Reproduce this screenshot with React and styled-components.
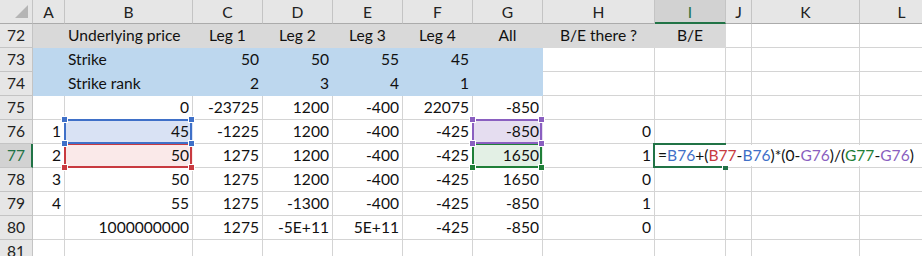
import React from "react";
import styled, { createGlobalStyle } from "styled-components";

const GRID = "#d4d4d4";
const HEAD_LINE = "#c4c4c4";
const EXCEL_GREEN = "#217346";

const GlobalStyle = createGlobalStyle`
  body {
    margin: 0;
    background: #fff;
    overflow: hidden;
    font-family: "Lato", "Liberation Sans", sans-serif;
  }
`;

const COLS = [
  ["A", 32], ["B", 128], ["C", 70], ["D", 70], ["E", 70], ["F", 70],
  ["G", 70], ["H", 112], ["I", 71], ["J", 26], ["K", 108], ["L", 84],
];

const Sheet = styled.div`
  display: grid;
  grid-template-columns: 33px ${COLS.map(([, w]) => `${w}px`).join(" ")};
  grid-auto-rows: 24px;
  font-size: 15.6px;
  color: #111;
  width: max-content;
`;

const Corner = styled.div`
  background: #e6e6e6;
  border-right: 1px solid ${HEAD_LINE};
  border-bottom: 1px solid #ababab;
  box-sizing: border-box;
  display: flex;
  align-items: flex-end;
  justify-content: flex-end;
  padding: 0 3px 4px 0;
`;

const ColHead = styled.div`
  background: ${(p) => (p.$active ? "#d2d2d2" : "#e6e6e6")};
  color: ${(p) => (p.$active ? EXCEL_GREEN : "#222")};
  border-right: 1px solid ${HEAD_LINE};
  border-bottom: ${(p) => (p.$active ? `2px solid ${EXCEL_GREEN}` : "1px solid #ababab")};
  box-sizing: border-box;
  display: flex;
  align-items: center;
  justify-content: center;
  padding-top: ${(p) => (p.$active ? "1px" : "0")};
`;

const RowHead = styled.div`
  background: ${(p) => (p.$active ? "#d2d2d2" : "#e6e6e6")};
  color: ${(p) => (p.$active ? EXCEL_GREEN : "#222")};
  border-right: ${(p) => (p.$active ? `2px solid ${EXCEL_GREEN}` : `1px solid ${HEAD_LINE}`)};
  border-bottom: 1px solid ${HEAD_LINE};
  box-sizing: border-box;
  text-align: center;
  line-height: 23px;
  padding-left: ${(p) => (p.$active ? "1px" : "0")};
`;

const Cell = styled.div`
  position: relative;
  box-sizing: border-box;
  background: ${(p) => p.$fill || "#fff"};
  border-right: 1px solid ${(p) => p.$fill || GRID};
  border-bottom: 1px solid ${(p) => p.$fill || GRID};
  padding: 0 3px;
  line-height: 23px;
  white-space: nowrap;
  text-align: ${(p) => p.$align};
`;

const SelBox = styled.div`
  position: absolute;
  top: -1px;
  left: -1px;
  right: 0;
  bottom: -1px;
  border: 2px solid ${(p) => p.$color};
  z-index: ${(p) => p.$z};
  pointer-events: none;
`;

const Handle = styled.span`
  position: absolute;
  width: 5px;
  height: 5px;
  background: ${(p) => p.$color};
  border: 1px solid #fff;
  ${(p) => (p.$v === "t" ? "top: -5px;" : "bottom: -5px;")}
  ${(p) => (p.$h === "l" ? "left: -5px;" : "right: -5px;")}
`;

const ActiveBox = styled.div`
  position: absolute;
  top: -1px;
  left: -2px;
  right: -1px;
  bottom: -1px;
  border: 2px solid ${EXCEL_GREEN};
  border-right: none;
  z-index: 5;
`;

const FillHandle = styled.span`
  position: absolute;
  right: -2px;
  bottom: -4px;
  width: 5px;
  height: 4px;
  background: ${EXCEL_GREEN};
  border-left: 1px solid #fff;
`;

const FormulaText = styled.span`
  position: absolute;
  left: 0;
  top: 1px;
  height: 21px;
  line-height: 21px;
  padding: 0 6px 0 3px;
  background: #fff;
  z-index: 4;
  white-space: nowrap;
`;

const Ref = styled.span`
  color: ${(p) => p.$color};
`;

const GRAY = "#d9d9d9";
const BLUE = "#bdd7ee";

const REF_COLORS = {
  B76: "#3f70c8",
  B77: "#c83a40",
  G76: "#8a5fc0",
  G77: "#1f7f38",
};

const SELECTIONS = {
  "76B": { color: REF_COLORS.B76, fill: "#d9e2f4", z: 3 },
  "77B": { color: REF_COLORS.B77, fill: "#fae9e9", z: 2 },
  "76G": { color: REF_COLORS.G76, fill: "#e5ddf0", z: 3 },
  "77G": { color: REF_COLORS.G77, fill: "#e3f0e5", z: 2 },
};

const rows = [
  { n: 72, fill: [GRAY, "ABCDEFGHI"], cells: { B: ["Underlying price", "left"], C: ["Leg 1", "center"], D: ["Leg 2", "center"], E: ["Leg 3", "center"], F: ["Leg 4", "center"], G: ["All", "center"], H: ["B/E there ?", "center"], I: ["B/E", "center"] } },
  { n: 73, fill: [BLUE, "ABCDEFG"], cells: { B: ["Strike", "left"], C: 50, D: 50, E: 55, F: 45 } },
  { n: 74, fill: [BLUE, "ABCDEFG"], cells: { B: ["Strike rank", "left"], C: 2, D: 3, E: 4, F: 1 } },
  { n: 75, cells: { B: 0, C: -23725, D: 1200, E: -400, F: 22075, G: -850 } },
  { n: 76, cells: { A: 1, B: 45, C: -1225, D: 1200, E: -400, F: -425, G: -850, H: 0 } },
  { n: 77, cells: { A: 2, B: 50, C: 1275, D: 1200, E: -400, F: -425, G: 1650, H: 1 } },
  { n: 78, cells: { A: 3, B: 50, C: 1275, D: 1200, E: -400, F: -425, G: 1650, H: 0 } },
  { n: 79, cells: { A: 4, B: 55, C: 1275, D: -1300, E: -400, F: -425, G: -850, H: 1 } },
  { n: 80, cells: { B: 1000000000, C: 1275, D: "-5E+11", E: "5E+11", F: -425, G: -850, H: 0 } },
  { n: 81, cells: {} },
];

const Formula = () => (
  <FormulaText>
    =<Ref $color={REF_COLORS.B76}>B76</Ref>+(<Ref $color={REF_COLORS.B77}>B77</Ref>-
    <Ref $color={REF_COLORS.B76}>B76</Ref>)*(0-<Ref $color={REF_COLORS.G76}>G76</Ref>)/(
    <Ref $color={REF_COLORS.G77}>G77</Ref>-<Ref $color={REF_COLORS.G76}>G76</Ref>)
  </FormulaText>
);

const CornerMark = () => (
  <svg width="14" height="14" viewBox="0 0 14 14">
    <polygon points="13,0 13,13 0,13" fill="#b5b5b5" />
  </svg>
);

const SheetCell = ({ row, col }) => {
  const raw = row.cells[col];
  let text = "";
  let align = "right";
  if (Array.isArray(raw)) {
    [text, align] = raw;
  } else if (raw !== undefined) {
    text = String(raw);
  }
  const key = `${row.n}${col}`;
  const sel = SELECTIONS[key];
  let fill = row.fill && row.fill[1].includes(col) ? row.fill[0] : undefined;
  if (sel) fill = sel.fill;
  const active = key === "77I";

  return (
    <Cell $align={align} $fill={fill}>
      {text}
      {sel && (
        <SelBox $color={sel.color} $z={sel.z}>
          {(sel.z === 3 ? ["tl", "tr", "bl", "br"] : ["bl", "br"]).map((c) => (
            <Handle key={c} $v={c[0]} $h={c[1]} $color={sel.color} />
          ))}
        </SelBox>
      )}
      {active && (
        <>
          <ActiveBox>
            <FillHandle />
          </ActiveBox>
          <Formula />
        </>
      )}
    </Cell>
  );
};

export default function App() {
  return (
    <>
      <GlobalStyle />
      <Sheet>
        <Corner>
          <CornerMark />
        </Corner>
        {COLS.map(([c]) => (
          <ColHead key={c} $active={c === "I"}>
            {c}
          </ColHead>
        ))}
        {rows.map((row) => (
          <React.Fragment key={row.n}>
            <RowHead $active={row.n === 77}>{row.n}</RowHead>
            {COLS.map(([c]) => (
              <SheetCell key={c} row={row} col={c} />
            ))}
          </React.Fragment>
        ))}
      </Sheet>
    </>
  );
}
